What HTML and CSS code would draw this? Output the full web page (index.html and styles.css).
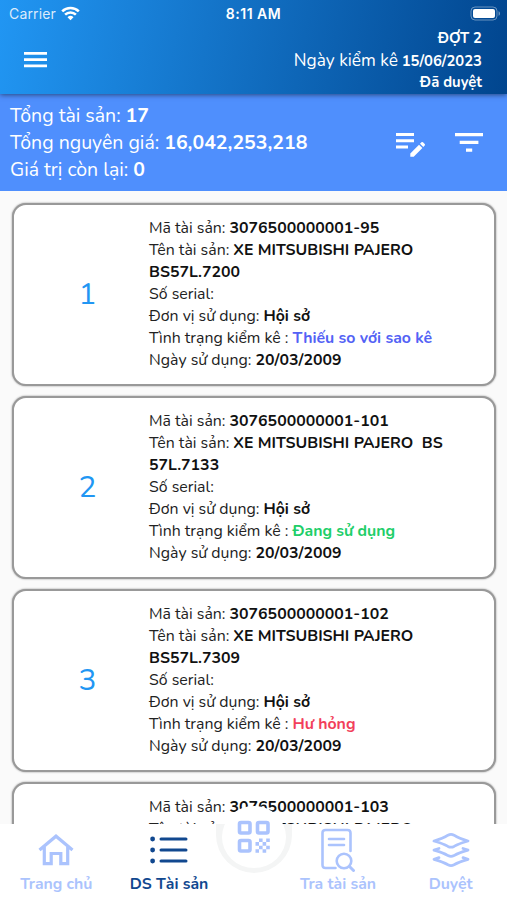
FILE: index.html
```html
<!DOCTYPE html>
<html lang="vi">
<head>
  <meta charset="UTF-8">
  <meta name="viewport" content="width=device-width, initial-scale=1.0">
  <title>DS Tài sản</title>
  <link rel="stylesheet" href="styles.css">
</head>
<body>
  <header>
    <div class="status-bar">
      <div class="carrier">
        <span>Carrier</span>
        <svg width="19" height="15" viewBox="0 0 19 15" fill="none" stroke="#fff" stroke-width="2.6">
          <path d="M1.2 5.4a12 12 0 0 1 16.6 0M4.1 8.6a7.8 7.8 0 0 1 10.8 0"/>
          <path d="M9.5 14.2 6.5 11.2a4.4 4.4 0 0 1 6 0z" fill="#fff" stroke="none"/>
        </svg>
      </div>
      <div class="clock">8:11 AM</div>
      <svg class="battery" width="31" height="15" viewBox="0 0 31 15">
        <rect x="1" y="1" width="26" height="13" rx="4" fill="none" stroke="#fff" stroke-opacity=".4"/>
        <rect x="3" y="3" width="22" height="9" rx="2" fill="#fff"/>
        <path d="M28.6 5.2c1.7.7 1.7 3.9 0 4.6z" fill="#fff" fill-opacity=".5"/>
      </svg>
    </div>
    <div class="app-bar">
      <svg class="menu-icon" width="24" height="16" viewBox="0 0 24 16" fill="#fff">
        <path d="M0 0h23v2.8H0zM0 6.3h23v2.8H0zM0 12.5h23v2.8H0z"/>
      </svg>
      <div class="period">
        <div><b>ĐỢT 2</b></div>
        <div><span class="period-label">Ngày kiểm kê</span> <b>15/06/2023</b></div>
        <div><b>Đã duyệt</b></div>
      </div>
    </div>
  </header>

  <section class="summary">
    <div class="totals">
      <div>Tổng tài sản: <b>17</b></div>
      <div>Tổng nguyên giá: <b>16,042,253,218</b></div>
      <div>Giá trị còn lại: <b>0</b></div>
    </div>
    <svg class="edit-icon" width="30" height="25" viewBox="0 0 30 25" fill="#fff">
      <path d="M0 0h18v3H0zM0 6.2h18v3H0zM0 12.4h12v3H0z"/>
      <path d="M14.3 20.4 23 11.7l3.4 3.4-8.7 8.700h-3.400zM24 10.700l1.400-1.400q.8-.7 1.600 0l1.700 1.700q.8.8 0 1.600l-1.400 1.400z"/>
    </svg>
    <svg class="filter-icon" width="28" height="20" viewBox="0 0 28 20" fill="#fff">
      <path d="M0 0h28v3.200H0zM4.700 7.800h18.700V11H4.700zM11 15.600h6.200v3.200H11z"/>
    </svg>
  </section>

  <main>
    <article class="card">
      <div class="number">1</div>
      <div class="details">
        <div>Mã tài sản: <b>3076500000001-95</b></div>
        <div>Tên tài sản: <b>XE MITSUBISHI PAJERO<br>BS57L.7200</b></div>
        <div>Số serial:</div>
        <div>Đơn vị sử dụng: <b>Hội sở</b></div>
        <div>Tình trạng kiểm kê : <b class="missing">Thiếu so với sao kê</b></div>
        <div>Ngày sử dụng: <b>20/03/2009</b></div>
      </div>
    </article>
    <article class="card">
      <div class="number">2</div>
      <div class="details">
        <div>Mã tài sản: <b>3076500000001-101</b></div>
        <div>Tên tài sản: <b>XE MITSUBISHI PAJERO&nbsp; BS<br>57L.7133</b></div>
        <div>Số serial:</div>
        <div>Đơn vị sử dụng: <b>Hội sở</b></div>
        <div>Tình trạng kiểm kê : <b class="in-use">Đang sử dụng</b></div>
        <div>Ngày sử dụng: <b>20/03/2009</b></div>
      </div>
    </article>
    <article class="card">
      <div class="number">3</div>
      <div class="details">
        <div>Mã tài sản: <b>3076500000001-102</b></div>
        <div>Tên tài sản: <b>XE MITSUBISHI PAJERO<br>BS57L.7309</b></div>
        <div>Số serial:</div>
        <div>Đơn vị sử dụng: <b>Hội sở</b></div>
        <div>Tình trạng kiểm kê : <b class="broken">Hư hỏng</b></div>
        <div>Ngày sử dụng: <b>20/03/2009</b></div>
      </div>
    </article>
    <article class="card">
      <div class="number"></div>
      <div class="details">
        <div>Mã tài sản: <b>3076500000001-103</b></div>
        <div>Tên tài sản: <b>XE MITSUBISHI PAJERO</b></div>
      </div>
    </article>
  </main>

  <nav>
    <a class="tab">
      <svg width="36" height="32" viewBox="0 0 36 32" fill="none" stroke="currentColor" stroke-width="3.2">
        <path d="M1.500 16 18 2.200 34.500 16M6.300 13v16.700h6.900V19.500h9.600v10.200h6.900V13"/>
      </svg>
      <span>Trang chủ</span>
    </a>
    <a class="tab active">
      <svg width="38" height="28" viewBox="0 0 38 28" fill="none" stroke="currentColor" stroke-width="3" stroke-linecap="round">
        <path d="M11 3h25M11 14h25M11 25h25"/>
        <path d="M2.600 3h.01M2.600 14h.01M2.600 25h.01" stroke-width="4.800"/>
      </svg>
      <span>DS Tài sản</span>
    </a>
    <div class="tab"></div>
    <a class="tab">
      <svg width="36" height="44" viewBox="0 0 36 44" fill="none" stroke="currentColor" stroke-width="2.600" stroke-linecap="round">
        <path d="M15.500 40H5.500Q2.500 40 2.500 37V5q0-3 3-3h22q3 0 3 3v18M9 11h15M9 17h15"/>
        <circle cx="24" cy="33" r="7.300"/>
        <path d="m29.500 38.500 4 4" stroke-width="3"/>
      </svg>
      <span>Tra tài sản</span>
    </a>
    <a class="tab">
      <svg width="38" height="36" viewBox="0 0 38 36" fill="none" stroke="currentColor" stroke-width="2.800" stroke-linejoin="round" stroke-linecap="round">
        <path d="M2 9Q11 6.500 16 3.200q3-1.800 6 0Q27 6.500 36 9q-9 2.500-14 5.400-3 1.600-6 0Q11 11.500 2 9z"/>
        <path d="M7 16.500 2 18.200q9 2.500 14 5.400 3 1.600 6 0 5-2.900 14-5.400l-5-1.700M7 25.700l-5 1.700q9 2.500 14 5.400 3 1.600 6 0 5-2.900 14-5.400l-5-1.700"/>
      </svg>
      <span>Duyệt</span>
    </a>
    <div class="notch"></div>
    <div class="scan-button">
      <svg width="34" height="34" viewBox="0 0 34 34" fill="none" stroke="currentColor" stroke-width="3.600">
        <rect x="2.500" y="2.500" width="10.500" height="10.500" rx="1.500"/>
        <rect x="20.500" y="2.500" width="10.500" height="10.500" rx="1.500"/>
        <rect x="2.500" y="20.500" width="10.500" height="10.500" rx="1.500"/>
        <path stroke="none" fill="currentColor" d="M22 18.500h3.600v3.600H22zM29.200 18.500h3.600v3.600h-3.600zM18.500 22.100H22v3.600h-3.500zM25.600 22.100h3.600v3.600h-3.600zM22 25.700h3.600v3.600H22zM29.200 25.700h3.600v3.600h-3.600zM18.500 29.300H22v3.500h-3.500zM25.600 29.300h3.600v3.500h-3.600z"/>
      </svg>
    </div>
  </nav>
</body>
</html>
```

FILE: styles.css
```css
* {
  box-sizing: border-box;
}

body {
  font-family: Nunito, Lato, "Noto Sans", sans-serif;
  margin: 0;
  height: 900px;
  overflow: hidden;
  display: flex;
  flex-direction: column;
  background-color: #fafafa;
  color: #222;
}

svg {
  display: block;
  flex: none;
}

header {
  position: relative;
  height: 94px;
  flex: none;
  color: #fff;
  background: linear-gradient(100deg, #2196f3, #01458e);
  box-shadow: 0 1px 5px rgba(0, 0, 0, 0.5);
}

.status-bar {
  height: 27px;
  display: grid;
  grid-template-columns: 1fr auto 1fr;
  align-items: center;
  padding: 0 6px 0 9px;
  font-family: Inter, sans-serif;
  font-size: 14px;
}

.carrier {
  display: flex;
  align-items: center;
  gap: 5px;
  color: #dcebfb;
  letter-spacing: 0.15px;
}

.clock {
  margin-right: 3px;
  font-weight: 600;
  letter-spacing: 0.5px;
}

.battery {
  justify-self: end;
}

.app-bar {
  display: flex;
  justify-content: space-between;
  padding: 0 25px 0 24px;
}

.menu-icon {
  margin-top: 25px;
}

.period {
  padding-top: 1px;
  text-align: right;
  font-size: 14.8px;
  line-height: 21.5px;
}

.period-label {
  font-size: 17.3px;
}

.summary {
  height: 97px;
  flex: none;
  display: flex;
  align-items: center;
  padding: 0 24px 0 10px;
  background-color: #4f8ffd;
  color: #fff;
}

.totals {
  flex: 1;
  font-size: 19.5px;
  line-height: 27px;
}

.edit-icon {
  margin: 6px 29px 0 0;
}

main {
  flex: 1;
  min-height: 0;
  overflow: hidden;
  display: flex;
  flex-direction: column;
  gap: 10px;
  padding: 12px 11px 0 12px;
}

.card {
  height: 183px;
  flex: none;
  display: grid;
  grid-template-columns: 135px 1fr;
  border: 2px solid #999;
  border-radius: 14px;
  background-color: #fff;
  box-shadow: 0 0 2px #888;
}

.number {
  align-self: center;
  padding-left: 12px;
  text-align: center;
  font-size: 30px;
  color: #2196f3;
}

.details {
  padding-top: 12px;
  font-size: 15.87px;
  line-height: 22px;
  white-space: nowrap;
}

.details b {
  color: #111;
}

.details .missing {
  color: #5362f5;
}

.details .in-use {
  color: #20ce68;
}

.details .broken {
  color: #f23f5b;
}

nav {
  position: relative;
  height: 76px;
  flex: none;
  display: grid;
  grid-template-columns: 2fr 2fr 1fr 2fr 2fr;
  background-color: #fff;
  color: #abc3fd;
}

.tab {
  display: grid;
  grid-template-rows: 52px 16px;
  justify-items: center;
  align-items: center;
  font-size: 15.8px;
  font-weight: 700;
  line-height: 16px;
  white-space: nowrap;
}

.tab.active {
  color: #11488f;
}

/* the round button sits in a cut-out of the bar */
.notch {
  position: absolute;
  top: 0;
  left: 216px;
  width: 76px;
  height: 49px;
  border-radius: 0 0 38px 38px;
  background-color: #f4f5f5;
}

.scan-button {
  position: absolute;
  top: -18px;
  left: 222px;
  width: 64px;
  height: 62px;
  border-radius: 50%;
  display: flex;
  justify-content: center;
  align-items: center;
  background-color: #fff;
}
```
